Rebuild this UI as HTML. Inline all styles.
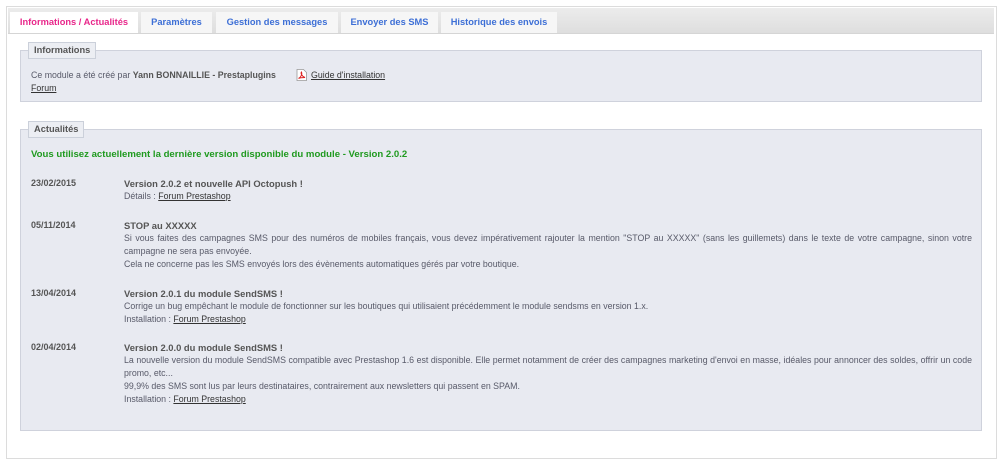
<!DOCTYPE html>
<html><head><meta charset="utf-8"><style>
body{margin:0;width:1000px;height:463px;background:#fff;font-family:"Liberation Sans",Arial,sans-serif;font-size:8.8px;color:#585a69;position:relative;overflow:hidden}
.abs{position:absolute}
#outer{left:6px;top:6px;width:989px;height:451px;border:1px solid #dcdcdc;background:#fff}
#bar{left:8px;top:8px;width:986px;height:25px;background:linear-gradient(#ececec,#dedede);border-bottom:1px solid #d5d5d5}
.tab{top:12px;height:21px;background:#f6f6f6;font-weight:bold;font-size:9.3px;color:#3d6fd6;line-height:20px;text-align:center}
.fs{left:20px;width:960px;background:#e8eaf1;border:1px solid #cfd2dc}
.lg{background:#eceef3;border:1px solid #cbd0da;font-weight:bold;font-size:9.3px;color:#555;line-height:15px;padding:0 5px}
a{color:#333;text-decoration:underline}
.d{left:31px;font-weight:bold;color:#555;font-size:9px}
.c{left:124px;width:848px}
.c div{height:13px;line-height:13px}
.t{font-weight:bold;color:#555;font-size:9.4px}
.j{text-align:justify;text-align-last:justify}
.l{line-height:13px}
</style></head><body>
<div class="abs" id="outer"></div>
<div class="abs" id="bar"></div>
<div class="abs tab" style="left:10px;width:128px;background:#fff;color:#e8268a">Informations / Actualités</div>
<div class="abs tab" style="left:141px;width:71px">Paramètres</div>
<div class="abs tab" style="left:216px;width:122px">Gestion des messages</div>
<div class="abs tab" style="left:341px;width:97px">Envoyer des SMS</div>
<div class="abs tab" style="left:441px;width:116px">Historique des envois</div>

<div class="abs fs" style="top:50px;height:50px"></div>
<div class="abs lg" style="left:28px;top:42px">Informations</div>
<div class="abs l" style="left:31px;top:69px">Ce module a été créé par <b style="color:#555">Yann BONNAILLIE - Prestaplugins</b></div>
<div class="abs l" style="left:31px;top:82px"><a>Forum</a></div>
<svg class="abs" style="left:296px;top:69px" width="11" height="12" viewBox="0 0 11 12"><path d="M1 .5h6.5l3 3V11.5H1z" fill="#fff" stroke="#999" stroke-width=".8"/><path d="M2.5 9.5c2-1 4-4 3-6.5-1 1 0 4 3.5 5.5-2 0-4.5 0-6.5 1z" fill="none" stroke="#d22" stroke-width="1"/></svg>
<div class="abs l" style="left:311px;top:69px"><a>Guide d'installation</a></div>

<div class="abs fs" style="top:129px;height:300px"></div>
<div class="abs lg" style="left:28px;top:121px">Actualités</div>
<div class="abs" style="left:31px;top:149px;font-weight:bold;font-size:9.6px;color:#1f9a1f">Vous utilisez actuellement la dernière version disponible du module - Version 2.0.2</div>

<div class="abs d l" style="top:177px">23/02/2015</div>
<div class="abs c" style="top:177px"><div class="t">Version 2.0.2 et nouvelle API Octopush !</div><div>Détails : <a>Forum Prestashop</a></div></div>

<div class="abs d l" style="top:219px">05/11/2014</div>
<div class="abs c" style="top:219px"><div class="t">STOP au XXXXX</div><div class="j">Si vous faites des campagnes SMS pour des numéros de mobiles français, vous devez impérativement rajouter la mention "STOP au XXXXX" (sans les guillemets) dans le texte de votre campagne, sinon votre</div><div>campagne ne sera pas envoyée.</div><div>Cela ne concerne pas les SMS envoyés lors des évènements automatiques gérés par votre boutique.</div></div>

<div class="abs d l" style="top:287px">13/04/2014</div>
<div class="abs c" style="top:287px"><div class="t">Version 2.0.1 du module SendSMS !</div><div>Corrige un bug empêchant le module de fonctionner sur les boutiques qui utilisaient précédemment le module sendsms en version 1.x.</div><div>Installation : <a>Forum Prestashop</a></div></div>

<div class="abs d l" style="top:341px">02/04/2014</div>
<div class="abs c" style="top:341px"><div class="t">Version 2.0.0 du module SendSMS !</div><div class="j">La nouvelle version du module SendSMS compatible avec Prestashop 1.6 est disponible. Elle permet notamment de créer des campagnes marketing d'envoi en masse, idéales pour annoncer des soldes, offrir un code</div><div>promo, etc...</div><div>99,9% des SMS sont lus par leurs destinataires, contrairement aux newsletters qui passent en SPAM.</div><div>Installation : <a>Forum Prestashop</a></div></div>
</body></html>
